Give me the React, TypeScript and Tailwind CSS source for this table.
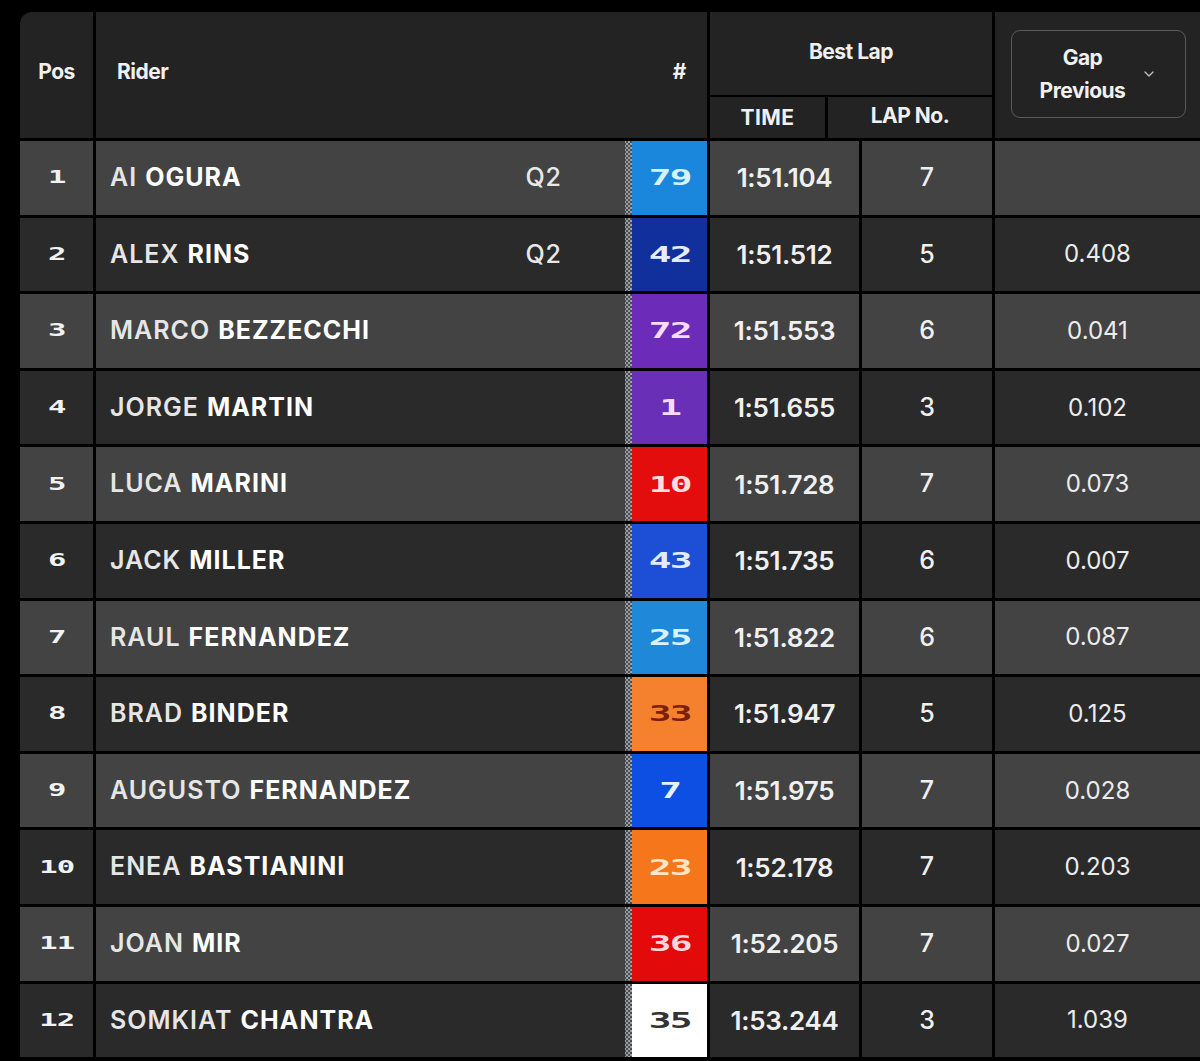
import React from 'react';
import { ChevronDown } from 'lucide-react';

type Row = {
  pos: number;
  first: string;
  last: string;
  q?: string;
  num: string;
  badge: string;
  time: string;
  lap: number;
  gap: string;
};

const rows: Row[] = [
  { pos: 1, first: 'AI', last: 'OGURA', q: 'Q2', num: '79', badge: 'bg-[#1b87dc] text-[#d6f3ff]', time: '1:51.104', lap: 7, gap: '' },
  { pos: 2, first: 'ALEX', last: 'RINS', q: 'Q2', num: '42', badge: 'bg-[#12309b] text-[#e6ecff]', time: '1:51.512', lap: 5, gap: '0.408' },
  { pos: 3, first: 'MARCO', last: 'BEZZECCHI', num: '72', badge: 'bg-[#6c2cb9] text-[#f5dcff]', time: '1:51.553', lap: 6, gap: '0.041' },
  { pos: 4, first: 'JORGE', last: 'MARTIN', num: '1', badge: 'bg-[#6a2fb7] text-[#f5dcff]', time: '1:51.655', lap: 3, gap: '0.102' },
  { pos: 5, first: 'LUCA', last: 'MARINI', num: '10', badge: 'bg-[#e30d0d] text-[#ffdede]', time: '1:51.728', lap: 7, gap: '0.073' },
  { pos: 6, first: 'JACK', last: 'MILLER', num: '43', badge: 'bg-[#1c4fd6] text-[#e2ecff]', time: '1:51.735', lap: 6, gap: '0.007' },
  { pos: 7, first: 'RAUL', last: 'FERNANDEZ', num: '25', badge: 'bg-[#1f88d9] text-[#d6f3ff]', time: '1:51.822', lap: 6, gap: '0.087' },
  { pos: 8, first: 'BRAD', last: 'BINDER', num: '33', badge: 'bg-[#f5812f] text-[#7a200c]', time: '1:51.947', lap: 5, gap: '0.125' },
  { pos: 9, first: 'AUGUSTO', last: 'FERNANDEZ', num: '7', badge: 'bg-[#0c4fe2] text-[#e2f2ff]', time: '1:51.975', lap: 7, gap: '0.028' },
  { pos: 10, first: 'ENEA', last: 'BASTIANINI', num: '23', badge: 'bg-[#f6761c] text-[#ffe6c8]', time: '1:52.178', lap: 7, gap: '0.203' },
  { pos: 11, first: 'JOAN', last: 'MIR', num: '36', badge: 'bg-[#e20a0a] text-[#ffd6dc]', time: '1:52.205', lap: 7, gap: '0.027' },
  { pos: 12, first: 'SOMKIAT', last: 'CHANTRA', num: '35', badge: 'bg-[#ffffff] text-[#333333]', time: '1:53.244', lap: 3, gap: '1.039' },
];

// chequered strip next to the rider number
const Checker = () => (
  <svg width="8" height="100%" className="h-full w-[8px] shrink-0">
    <defs>
      <pattern id="chk" width="4" height="4" patternUnits="userSpaceOnUse">
        <rect width="4" height="4" fill="#4a4a4c" />
        <rect x="0" y="0" width="2" height="2" fill="#9aa0a8" />
        <rect x="2" y="2" width="2" height="2" fill="#9aa0a8" />
      </pattern>
    </defs>
    <rect x="1" width="7" height="100%" fill="url(#chk)" />
  </svg>
);

const NumText = ({ children, size }: { children: React.ReactNode; size: 'sm' | 'lg' }) => (
  <span
    className={`inline-block scale-x-[1.8] font-bold font-['DejaVu_Sans_Mono',monospace] leading-none ${
      size === 'sm' ? 'text-[17px] tracking-[-0.5px]' : 'text-[21px] tracking-[-1px] translate-y-[1px]'
    }`}
  >
    {children}
  </span>
);

export default function App() {
  return (
    <div className="w-[1200px] h-[1061px] bg-black overflow-hidden pt-[12px] pl-[20px] font-['Inter',sans-serif] text-[#f0f0f0]">
      <div className="w-[1180px] rounded-tl-[12px] overflow-hidden flex flex-col gap-[3px] bg-black">
        {/* Header */}
        <div className="flex gap-[3px] h-[126px]">
          <div className="w-[73px] bg-[#232323] flex items-center justify-center pb-[7px] text-[21px] font-bold tracking-[-0.5px]">
            Pos
          </div>
          <div className="w-[611px] bg-[#232323] flex items-center justify-between pl-[21px] pr-[21px] pb-[7px] text-[21px] font-bold tracking-[-0.5px]">
            <span>Rider</span>
            <span>#</span>
          </div>
          <div className="w-[282px] flex flex-col gap-[2px]">
            <div className="h-[83px] bg-[#232323] flex items-center justify-center pb-[3px] text-[21px] font-bold tracking-[-0.5px]">
              Best Lap
            </div>
            <div className="flex-1 flex gap-[3px]">
              <div className="w-[115px] bg-[#232323] flex items-center justify-center text-[21px] font-bold tracking-[0.5px]">
                TIME
              </div>
              <div className="flex-1 bg-[#232323] flex items-center justify-center pb-[4px] text-[21px] font-bold tracking-[-0.5px]">
                LAP No.
              </div>
            </div>
          </div>
          <div className="flex-1 bg-[#232323] flex items-center pl-[16px] pb-[2px]">
            <div className="w-[175px] h-[88px] rounded-[9px] border-[1.5px] border-[#5a5a5a] flex items-center justify-center gap-[16px]">
              <div className="text-center text-[21px] font-bold leading-[33px] tracking-[-0.5px]">
                <div>Gap</div>
                <div>Previous</div>
              </div>
              <ChevronDown className="w-[16px] h-[16px] text-[#bdbdbd]" strokeWidth={2} />
            </div>
          </div>
        </div>

        {/* Body */}
        {rows.map((r, i) => {
          const bg = i % 2 === 0 ? 'bg-[#434343]' : 'bg-[#2a2a2a]';
          return (
            <div key={r.pos} className="flex gap-[3px] h-[73.6px]">
              <div className={`w-[73px] ${bg} flex items-center justify-center text-[#f2f2f2]`}>
                <NumText size="sm">{r.pos}</NumText>
              </div>
              <div className={`w-[611px] ${bg} flex`}>
                <div className="flex-1 flex items-center pl-[14px] pr-[62px] text-[25px] tracking-[1px]">
                  <span className="flex-1">
                    <span className="font-semibold text-[#e6e6e6]">{r.first}</span>{' '}
                    <span className="font-bold text-white">{r.last}</span>
                  </span>
                  {r.q && <span className="font-medium text-[#e8e8e8]">{r.q}</span>}
                </div>
                <Checker />
                <div className={`w-[75px] flex items-center justify-center ${r.badge}`}>
                  <NumText size="lg">{r.num}</NumText>
                </div>
              </div>
              <div className={`w-[149px] ${bg} flex items-center justify-center text-[26px] font-semibold tracking-[-0.3px]`}>
                {r.time}
              </div>
              <div className={`w-[130px] ${bg} flex items-center justify-center text-[25px] font-medium`}>
                {r.lap}
              </div>
              <div className={`flex-1 ${bg} flex items-center justify-center text-[24px] font-normal text-[#ececec]`}>
                {r.gap}
              </div>
            </div>
          );
        })}
      </div>
    </div>
  );
}
